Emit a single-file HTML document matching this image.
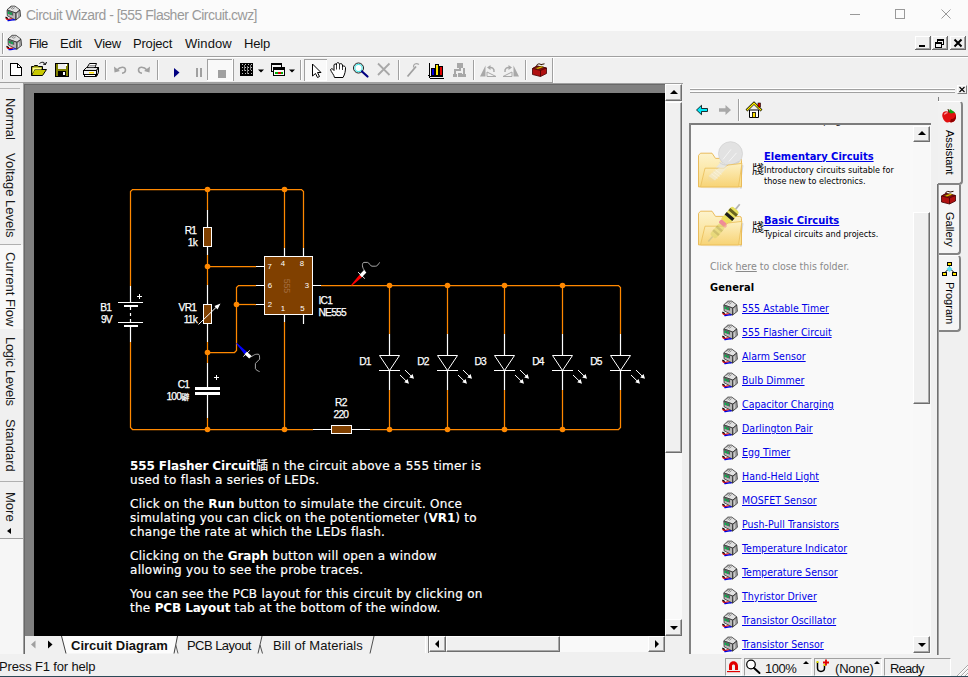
<!DOCTYPE html>
<html>
<head>
<meta charset="utf-8">
<title>Circuit Wizard - [555 Flasher Circuit.cwz]</title>
<style>
html,body{margin:0;padding:0;}
body{width:968px;height:677px;overflow:hidden;background:#f0f0f0;position:relative;font-family:"Liberation Sans","Noto Sans CJK SC",sans-serif;color:#000;}
.abs{position:absolute;}
#titlebar{left:0;top:0;width:968px;height:31px;background:#fbfbfb;}
#title{left:26px;top:6.5px;font-size:14px;line-height:16px;color:#9a9a9a;font-family:"Liberation Sans",sans-serif;white-space:nowrap;letter-spacing:-0.52px;}
#menubar{left:0;top:31px;width:968px;height:25px;background:#f1f1f1;}
.menu{top:36px;font-size:13px;line-height:15px;color:#111;white-space:nowrap;font-family:"Liberation Sans",sans-serif;}
.vtab{position:absolute;white-space:nowrap;transform-origin:0 0;transform:rotate(90deg);font-size:13px;line-height:14px;color:#1a1a1a;font-family:"Liberation Sans",sans-serif;}
.vtab.rv{font-size:11px;line-height:12px;color:#000;}
#grayarea{left:25px;top:84px;width:640px;height:552px;background:#808080;}
#canvas{left:34px;top:93px;width:631px;height:543px;background:#000;}
#desc{left:130px;top:458px;width:400px;color:#fff;font-family:"DejaVu Sans","Noto Sans CJK SC",sans-serif;font-size:12px;line-height:14px;letter-spacing:0.28px;white-space:nowrap;-webkit-text-stroke:0.2px #fff;}
#desc p{margin:0 0 10px 0;}
#desc b{letter-spacing:-0.1px;-webkit-text-stroke:0;}
.btxt{font-size:13px;line-height:15px;font-family:"Liberation Sans",sans-serif;white-space:nowrap;color:#111;}
.sbtn{background:#f0f0f0;border:1px solid;border-color:#fff #6e6e6e #6e6e6e #fff;box-shadow:inset -1px -1px 0 #a8a8a8;box-sizing:border-box;}
.pane{border:1px solid;border-color:#a0a0a0 #fff #fff #a0a0a0;box-sizing:border-box;}
.rt{position:absolute;font-family:"DejaVu Sans Condensed","DejaVu Sans","Liberation Sans",sans-serif;white-space:nowrap;}
.rt.hd{font-size:11px;line-height:13px;font-weight:bold;color:#0000e8;text-decoration:underline;}
.rt.sm{font-size:9px;line-height:11px;color:#000;margin-top:1px;}
.rt.li{left:53px;font-size:10.5px;line-height:13px;color:#0000e8;text-decoration:underline;letter-spacing:0.04px;margin-top:1px;}
</style>
</head>
<body>
<div id="titlebar" class="abs"></div>
<div id="title" class="abs">Circuit Wizard - [555 Flasher Circuit.cwz]</div>
<div id="menubar" class="abs"></div>
<div class="abs menu" style="left:29px;letter-spacing:-0.6px">File</div>
<div class="abs menu" style="left:60px;letter-spacing:-0.2px">Edit</div>
<div class="abs menu" style="left:94px;letter-spacing:-0.3px">View</div>
<div class="abs menu" style="left:133px;letter-spacing:-0.2px">Project</div>
<div class="abs menu" style="left:185px;letter-spacing:0.1px">Window</div>
<div class="abs menu" style="left:244px;letter-spacing:-0.2px">Help</div>
<div id="grayarea" class="abs"></div>
<div id="canvas" class="abs"></div>
<div id="desc" class="abs">
<p><b>555 Flasher Circuit</b><span style="font-family:'Noto Sans CJK SC',sans-serif;font-size:12px;letter-spacing:0">牐</span> n the circuit above a 555 timer is<br>used to flash a series of LEDs.</p>
<p>Click on the <b>Run</b> button to simulate the circuit. Once<br>simulating you can click on the potentiometer (<b>VR1</b>) to<br>change the rate at which the LEDs flash.</p>
<p>Clicking on the <b>Graph</b> button will open a window<br>allowing you to see the probe traces.</p>
<p>You can see the PCB layout for this circuit by clicking on<br>the <b>PCB Layout</b> tab at the bottom of the window.</p>
</div>

<svg class="abs" style="left:0;top:0" width="968" height="677" viewBox="0 0 968 677">
<g fill="none" stroke="#ff8800" stroke-width="1.250">
<!-- top rail and battery side -->
<path d="M130.5 286 V191.5 L132.500 189.500 H301.500 L303.500 191.500 V248"/>
<path d="M130.500 342 V427.500 L132.500 429.500 H313"/>
<path d="M207.5 189.5 V210"/>
<path d="M207.5 255 V285"/>
<path d="M207.5 266.5 H256"/>
<path d="M284.500 189.5 V248"/>
<path d="M207.5 342 V363"/>
<path d="M207.5 418 V429.5"/>
<path d="M256 285.500 H238.500 L236.500 287.500 V350.500 L234.500 352.500 H207.500"/>
<path d="M236.500 304.500 H256"/>
<path d="M284.500 322 V429.5"/>
<path d="M321 285.500 H618.500 L620.500 287.500 V334"/>
<path d="M620.500 390 V427.500 L618.500 429.500 H370"/>
<path d="M389.500 285.5 V334 M389.500 390 V429.5"/>
<path d="M447.500 285.5 V334 M447.500 390 V429.5"/>
<path d="M504.500 285.500 V334 M504.500 390 V429.500"/>
<path d="M562.500 285.5 V334 M562.500 390 V429.5"/>
</g>
<g fill="#ff8800" stroke="none">
<circle cx="207.5" cy="189.500" r="2.8"/><circle cx="284.500" cy="189.500" r="2.8"/>
<circle cx="207.5" cy="266.500" r="2.8"/><circle cx="236.500" cy="304.500" r="2.800"/>
<circle cx="207.5" cy="352.500" r="2.8"/><circle cx="207.5" cy="429.500" r="2.8"/>
<circle cx="284.500" cy="429.500" r="2.8"/>
<circle cx="389.500" cy="285.500" r="2.8"/><circle cx="447.500" cy="285.500" r="2.8"/><circle cx="504.500" cy="285.500" r="2.800"/><circle cx="562.500" cy="285.500" r="2.8"/>
<circle cx="389.500" cy="429.500" r="2.8"/><circle cx="447.500" cy="429.500" r="2.8"/><circle cx="504.500" cy="429.500" r="2.800"/><circle cx="562.500" cy="429.500" r="2.8"/>
</g>
<!-- white leads -->
<g fill="none" stroke="#fff" stroke-width="1.200">
<path d="M130.5 286 V302 M130.5 327 V342"/>
<path d="M118 302.500 H143 M118 322.500 H143"/>
<path d="M130.500 307 V310 M130.500 313 V316 M130.500 319 V322"/>
<path d="M207.5 210 V227 M207.5 247 V255"/>
<path d="M207.5 285 V304 M207.5 324 V342"/>
<path d="M207.5 363 V387 M207.5 395 V418"/>
<path d="M256 266.500 H264 M256 285.500 H264 M256 304.500 H264 M312 285.500 H321"/>
<path d="M284.500 248 V256 M303.500 248 V256 M284.500 315 V322 M303.500 315 V324"/>
<path d="M313 429.500 H331 M352 429.500 H370"/>
<path d="M389.500 334 V390 M447.500 334 V390 M504.500 334 V390 M562.500 334 V390 M620.500 334 V390"/>
</g>
<!-- battery thick plates -->
<g fill="#fff" shape-rendering="crispEdges">
<rect x="124" y="305" width="14" height="2"/><rect x="124" y="325" width="14" height="2"/>
<rect x="195" y="387" width="25" height="3"/><rect x="195" y="392" width="25" height="3"/>
</g>
<!-- resistors -->
<g fill="#804000" stroke="#fff" stroke-width="1" shape-rendering="crispEdges">
<rect x="203.500" y="227.500" width="8" height="19"/>
<rect x="203.500" y="304.500" width="8" height="19"/>
<rect x="331.500" y="425.500" width="20" height="8"/>
<rect x="264.500" y="256.500" width="48" height="58"/>
</g>
<!-- VR arrow -->
<g stroke="#fff" stroke-width="1" fill="#fff">
<path d="M198.500 324.500 L217.500 306"/>
<path d="M220.500 303.500 L214.500 306 L217.500 309.500 Z" stroke="none"/>
</g>
<!-- plus signs -->
<g stroke="#fff" stroke-width="1" shape-rendering="crispEdges" fill="none">
<path d="M137 296.500 H142 M139.500 294 V299"/>
<path d="M214 377.500 H219 M216.500 375 V380"/>
</g>
<!-- LEDs -->
<g id="leds" stroke="#fff" stroke-width="1" fill="none">
<g id="led"><path d="M379.500 355.500 H399.500 L389.500 370.500 Z" fill="#000"/><path d="M379 370.500 H400" shape-rendering="crispEdges"/>
<path d="M405 370 L411.500 376.400 M400 375 L406.500 381.300"/>
<path d="M414 378.800 L412.600 374 L409.200 377.400 Z M409 383.700 L407.600 378.900 L404.200 382.300 Z" fill="#fff" stroke="none"/></g>
<use href="#led" x="58"/><use href="#led" x="115"/><use href="#led" x="173"/><use href="#led" x="231"/>
</g>
<!-- probes -->
<g fill="none">
<path d="M351.100 285 L351.900 285.800 L361.900 277.200 L359.500 274.800 Z" fill="#ff0000"/>
<path d="M359.500 274.800 L364 270.100 L366.400 272.500 L361.900 277.200 Z" fill="#fff"/>
<path d="M358 272.100 L364.800 278.600" stroke="#fff" stroke-width="0.900"/>
<path d="M365 271 C362 268 361.500 263 364 262.400 H367.500 C369.500 262.600 370 266.200 372 266.200 H375.500 C377.500 266.200 378.500 264 379.600 262.400" stroke="#d0d0d0" stroke-width="0.800"/>
<path d="M236.900 343 L236.100 343.600 L244.500 354.200 L246.900 351.800 Z" fill="#0000ff"/>
<path d="M246.900 351.800 L251.600 356 L249.200 358.400 L244.500 354.200 Z" fill="#fff"/>
<path d="M243.300 356.600 L249.800 350.400" stroke="#fff" stroke-width="0.900"/>
<path d="M250.400 357.200 L253.400 355.400 C255 354.300 256 354.200 258.100 354.200 C259.600 354.300 259.600 356 259.600 359.200 L255.400 363.400 V368.700 C256 370 258 371 259.600 371.600" stroke="#d0d0d0" stroke-width="0.800"/>
</g>
<!-- labels -->
<g font-family="'Liberation Sans',sans-serif" font-size="10.200" fill="#fff" stroke="#fff" stroke-width="0.250" letter-spacing="-0.750">
<text x="196.200" y="234" text-anchor="end">R1</text><text x="197.100" y="245.700" text-anchor="end">1k</text>
<text x="196.200" y="311" text-anchor="end">VR1</text><text x="197.100" y="322.600" text-anchor="end">11k</text>
<text x="111.200" y="311" text-anchor="end">B1</text><text x="111.900" y="322.700" text-anchor="end">9V</text>
<text x="189.200" y="388" text-anchor="end">C1</text><text x="189.200" y="399.800" text-anchor="end" font-family="'Liberation Sans','Noto Sans CJK SC',sans-serif">100<tspan font-size="8" letter-spacing="0">礔</tspan></text>
<text x="318.500" y="303.900">IC1</text><text x="318.500" y="315.900">NE555</text>
<text x="340.800" y="405.600" text-anchor="middle">R2</text><text x="340.900" y="417.800" text-anchor="middle">220</text>
<text x="359.200" y="364.900">D1</text><text x="417.200" y="364.900">D2</text><text x="474.400" y="364.900">D3</text><text x="532.200" y="364.900">D4</text><text x="590.200" y="364.900">D5</text>
</g>
<g font-family="'Liberation Sans',sans-serif" font-size="7.800" fill="#fff" text-anchor="middle">
<text x="269.700" y="268.700">7</text><text x="269.800" y="287.700">6</text><text x="269.800" y="306.700">2</text>
<text x="282.900" y="265.800">4</text><text x="302" y="265.800">8</text><text x="307" y="287.700">3</text>
<text x="283" y="310.700">1</text><text x="302.300" y="310.700">5</text>
<text x="0" y="0" fill="#a36c3e" font-size="8.800" letter-spacing="-0.200" transform="translate(284.300 285.800) rotate(90)">555</text>
</g>
</svg>

<!-- left vertical tabs -->
<div class="abs" style="left:0;top:88px;width:20px;height:1px;background:#b8b8b8"></div>
<div class="abs" style="left:0;top:245px;width:23px;height:84px;background:#f8f8f8"></div>
<div class="abs" style="left:0;top:244px;width:21px;height:1px;background:#b0b0b0"></div>
<div class="abs" style="left:0;top:481px;width:23px;height:1px;background:#b0b0b0"></div>
<div class="abs" style="left:0;top:538px;width:24px;height:1px;background:#a0a0a0"></div>
<div class="abs" style="left:23px;top:481px;width:1px;height:58px;background:#a0a0a0"></div>
<div class="abs" style="left:0;top:539px;width:24px;height:115px;background:#f6f6f6"></div>
<div class="vtab" style="left:17px;top:98px">Normal</div>
<div class="vtab" style="left:17px;top:153px">Voltage Levels</div>
<div class="vtab" style="left:17px;top:252px">Current Flow</div>
<div class="vtab" style="left:17px;top:337px;letter-spacing:-0.3px">Logic Levels</div>
<div class="vtab" style="left:17px;top:419px">Standard</div>
<div class="vtab" style="left:17px;top:492px">More</div>
<div class="abs" style="left:7px;top:528px;width:0;height:0;border-top:3px solid transparent;border-bottom:3px solid transparent;border-right:4px solid #000"></div>
<!-- MDI frame & scrollbars -->
<div class="abs" style="left:23px;top:83px;width:660px;height:1px;background:#a0a0a0"></div>
<div class="abs" style="left:24px;top:84px;width:658px;height:1px;background:#696969"></div>
<div class="abs" style="left:23px;top:83px;width:1px;height:571px;background:#a0a0a0"></div>
<div class="abs" style="left:24px;top:84px;width:1px;height:570px;background:#696969"></div>
<!-- vscroll -->
<div class="abs" style="left:665px;top:84px;width:17px;height:552px;background:#f9f9f9"></div>
<div class="abs sbtn" style="left:665px;top:84px;width:17px;height:17px"></div>
<div class="abs sbtn" style="left:665px;top:102px;width:17px;height:351px"></div>
<div class="abs sbtn" style="left:665px;top:619px;width:17px;height:17px"></div>
<div class="abs" style="left:670px;top:90px;width:0;height:0;border-left:4px solid transparent;border-right:4px solid transparent;border-bottom:4px solid #000"></div>
<div class="abs" style="left:670px;top:626px;width:0;height:0;border-left:4px solid transparent;border-right:4px solid transparent;border-top:4px solid #000"></div>
<!-- bottom tab strip -->
<div class="abs" style="left:25px;top:636px;width:657px;height:18px;background:#f0f0f0"></div>
<div class="abs" style="left:429px;top:636px;width:236px;height:16px;background:#f9f9f9"></div>
<div class="abs" style="left:425px;top:636px;width:4px;height:17px;background:#f0f0f0;border-left:1px solid #fff;border-right:1px solid #808080;box-sizing:border-box"></div>
<div class="abs sbtn" style="left:429px;top:636px;width:17px;height:16px"></div>
<div class="abs sbtn" style="left:446px;top:636px;width:114px;height:16px"></div>
<div class="abs sbtn" style="left:648px;top:636px;width:17px;height:16px"></div>
<div class="abs" style="left:435px;top:640px;width:0;height:0;border-top:4px solid transparent;border-bottom:4px solid transparent;border-right:4px solid #000"></div>
<div class="abs" style="left:655px;top:640px;width:0;height:0;border-top:4px solid transparent;border-bottom:4px solid transparent;border-left:4px solid #000"></div>
<div class="abs" style="left:665px;top:636px;width:17px;height:17px;background:#f0f0f0"></div>
<svg class="abs" style="left:25px;top:636px" width="400" height="18" viewBox="0 0 400 18">
<path d="M36.500 0 L41 17.500 H149 L152.500 0 Z" fill="#fcfcfc" stroke="none"/>
<path d="M36.500 0 L41 17.500" fill="none" stroke="#404040" stroke-width="1"/>
<path d="M149 17.500 L152.500 0" fill="none" stroke="#404040" stroke-width="1"/>
<path d="M150.800 9 L153 17.500" fill="none" stroke="#606060" stroke-width="1"/>
<path d="M233 17.500 L237 0 M235 9 L237.500 17.500" fill="none" stroke="#505050" stroke-width="1"/>
<path d="M345 17.500 L349 0" fill="none" stroke="#505050" stroke-width="1"/>
<path d="M10.500 4.500 V12.500 L6 8.500 Z" fill="#a0a0a0"/>
<path d="M23 4.500 V12.500 L27.500 8.500 Z" fill="#000"/>
</svg>
<div class="abs btxt" style="left:71px;top:638px;font-weight:bold;letter-spacing:0">Circuit Diagram</div>
<div class="abs btxt" style="left:187px;top:638px;letter-spacing:-0.55px">PCB Layout</div>
<div class="abs btxt" style="left:273px;top:638px;letter-spacing:0.1px">Bill of Materials</div>
<!-- status bar -->
<div class="abs btxt" style="left:-1px;top:659px;letter-spacing:-0.15px">Press F1 for help</div>
<div class="abs pane" style="left:725px;top:658px;width:17px;height:18px"></div>
<div class="abs pane" style="left:744px;top:658px;width:68px;height:18px"></div>
<div class="abs pane" style="left:814px;top:658px;width:68px;height:18px"></div>
<div class="abs pane" style="left:884px;top:658px;width:67px;height:18px"></div>
<div class="abs btxt" style="left:765px;top:661px;letter-spacing:-0.5px">100%</div>
<div class="abs btxt" style="left:835px;top:661px;letter-spacing:-0.2px">(None)</div>
<div class="abs btxt" style="left:890px;top:661px;letter-spacing:-0.8px">Ready</div>
<div class="abs" style="left:803px;top:661px;width:0;height:0;border-left:3px solid transparent;border-right:3px solid transparent;border-bottom:3px solid #000"></div>
<div class="abs" style="left:874px;top:661px;width:0;height:0;border-left:3px solid transparent;border-right:3px solid transparent;border-bottom:3px solid #000"></div>
<div class="abs" style="left:0;top:675.5px;width:968px;height:1.5px;background:#2c4a58"></div>

<!-- right panel -->
<div class="abs" style="left:690px;top:88px;width:265px;height:2px;border-top:1px solid #fff;border-bottom:1px solid #a0a0a0;box-sizing:border-box"></div>
<div class="abs" style="left:690px;top:91px;width:265px;height:2px;border-top:1px solid #fff;border-bottom:1px solid #a0a0a0;box-sizing:border-box"></div>
<div class="abs" style="left:957px;top:85px;width:10px;height:9px;border:1px solid;border-color:#fff #808080 #808080 #fff;box-sizing:border-box;background:#f0f0f0"></div>
<div class="abs" style="left:937px;top:184px;width:1px;height:471px;background:#707070"></div>
<div class="abs" style="left:938px;top:184px;width:1px;height:471px;background:#a0a0a0"></div>
<div id="rc" class="abs" style="left:689px;top:123px;width:242px;height:531px;background:#f9f9f9;overflow:hidden">
<div class="rt" style="left:134px;top:-9.500px;font-size:11px;line-height:13px;color:#333">page.</div>
<div class="abs" style="left:0;top:0;width:242px;height:2px;background:#7c7c7c"></div>
<div class="abs" style="left:0;top:0;width:2px;height:531px;background:#828282"></div>
<div class="abs" style="left:0;top:1px;width:242px;height:530px">
<a class="rt hd" style="left:75px;top:25.500px">Elementary Circuits</a>
<div class="rt sm" style="left:63px;top:38px;font-family:'Noto Sans CJK SC','WenQuanYi Zen Hei',sans-serif;font-size:12px;line-height:12px">牋</div>
<div class="rt sm" style="left:75px;top:40px">Introductory circuits suitable for</div>
<div class="rt sm" style="left:75px;top:51px">those new to electronics.</div>
<a class="rt hd" style="left:75px;top:89.500px">Basic Circuits</a>
<div class="rt sm" style="left:63px;top:96px;font-family:'Noto Sans CJK SC','WenQuanYi Zen Hei',sans-serif;font-size:12px;line-height:12px">牋</div>
<div class="rt sm" style="left:75px;top:104px">Typical circuits and projects.</div>
<div class="rt" style="left:21px;top:136px;font-size:10.5px;color:#8a8a8a">Click <span style="text-decoration:underline">here</span> to close this folder.</div>
<div class="rt" style="left:21px;top:157px;font-size:11px;font-weight:bold;color:#000;letter-spacing:0.1px">General</div>
<a class="rt li" style="top:177px">555 Astable Timer</a>
<a class="rt li" style="top:201px">555 Flasher Circuit</a>
<a class="rt li" style="top:225px">Alarm Sensor</a>
<a class="rt li" style="top:249px">Bulb Dimmer</a>
<a class="rt li" style="top:273px">Capacitor Charging</a>
<a class="rt li" style="top:297px">Darlington Pair</a>
<a class="rt li" style="top:321px">Egg Timer</a>
<a class="rt li" style="top:345px">Hand-Held Light</a>
<a class="rt li" style="top:369px">MOSFET Sensor</a>
<a class="rt li" style="top:393px">Push-Pull Transistors</a>
<a class="rt li" style="top:417px">Temperature Indicator</a>
<a class="rt li" style="top:441px">Temperature Sensor</a>
<a class="rt li" style="top:465px">Thyristor Driver</a>
<a class="rt li" style="top:489px">Transistor Oscillator</a>
<a class="rt li" style="top:513px">Transistor Sensor</a>
<!-- inner scrollbar -->
<div class="abs" style="left:224px;top:2px;width:17px;height:528px;background:#f8f8f8"></div>
<div class="abs sbtn" style="left:224px;top:2px;width:17px;height:16px"></div>
<div class="abs sbtn" style="left:224px;top:88px;width:17px;height:192px"></div>
<div class="abs sbtn" style="left:224px;top:512px;width:17px;height:17px"></div>
<div class="abs" style="left:229px;top:7px;width:0;height:0;border-left:4px solid transparent;border-right:4px solid transparent;border-bottom:4px solid #000"></div>
<div class="abs" style="left:229px;top:519px;width:0;height:0;border-left:4px solid transparent;border-right:4px solid transparent;border-top:4px solid #000"></div>
</div>
</div>
<!-- right vertical tabs -->
<div class="abs" style="left:938px;top:97px;width:1px;height:5px;background:#808080"></div>
<div class="abs" style="left:938px;top:101px;width:25px;height:84px;border-top:1px solid #fff;border-right:2px solid #858585;border-bottom:2px solid #858585;box-sizing:border-box;border-radius:0 4px 4px 0;background:#f1f1f1"></div>
<div class="abs" style="left:939px;top:185px;width:22px;height:70px;border-right:2px solid #858585;border-bottom:2px solid #858585;box-sizing:border-box;border-radius:0 0 4px 0;background:#f5f5f5"></div>
<div class="abs" style="left:939px;top:255px;width:22px;height:77px;border-top:1px solid #fff;border-right:2px solid #858585;border-bottom:2px solid #858585;box-sizing:border-box;border-radius:0 4px 4px 0;background:#f5f5f5"></div>
<div class="vtab rv" style="left:956px;top:130px">Assistant</div>
<div class="vtab rv" style="left:956px;top:212px">Gallery</div>
<div class="vtab rv" style="left:956px;top:282px">Program</div>

<svg class="abs" style="left:0;top:0" width="968" height="677" viewBox="0 0 968 677">
<defs>
<g id="cwicon">
<path d="M2 4.500 L6 0.800 H10 L15 4.600 L11 7.800 Z" fill="#e2e2e2" stroke="#1a1a1a" stroke-width="0.700" stroke-linejoin="round"/>
<path d="M4.500 3 L6.800 1.200 M6 3.500 L8.300 1.700 M7.500 4 L9.800 2.200" stroke="#666" stroke-width="0.700" fill="none"/>
<path d="M2 4.800 L11 7.800 L10.800 14.800 L2.300 10.500 Z" fill="#b8b8b8" stroke="#1a1a1a" stroke-width="0.700" stroke-linejoin="round"/>
<path d="M2.400 5.300 L8.200 7.200 L8.200 10.400 L2.500 8.500 Z" fill="#5a5a5a"/>
<path d="M3.600 6.500 V8.600 M6 7.300 V9.400" stroke="#00c050" stroke-width="1.400"/>
<path d="M11 7.800 L15 4.800 L15.600 11 L10.800 14.800 Z" fill="#a4a4a4" stroke="#1a1a1a" stroke-width="0.700" stroke-linejoin="round"/>
<path d="M12.300 8 L12.600 12.500" stroke="#dcdcdc" stroke-width="1"/>
<path d="M0.800 12.800 C2.500 15.800 5 13.200 7 13.600" stroke="#e00000" stroke-width="1.300" fill="none"/>
<path d="M2.500 15 C5 16 7.500 13.500 9.800 14.800" stroke="#0000e0" stroke-width="1.300" fill="none"/>
<path d="M0.500 11.800 L3 13.200" stroke="#000" stroke-width="1.200" fill="none"/>
</g>
<g id="toolbox">
<path d="M0.500 5.500 L5 3 L14.500 5 L14.500 10.500 L8.500 13.500 L0.500 11.500 Z" fill="#b01010" stroke="#400" stroke-width="0.800"/>
<path d="M0.500 5.500 L8.500 7.500 L14.500 5 L10.500 4.200 L5 3 Z" fill="#801010" stroke="#400" stroke-width="0.600"/>
<path d="M3.500 5.200 L9.500 3.200 L11.500 4 L6 6 Z" fill="#ffe000" stroke="#604000" stroke-width="0.500"/>
<path d="M8.500 7.500 V13.500" stroke="#400" stroke-width="0.800"/>
<path d="M4.500 2.800 C5 0.500 8 0.500 9 1.600 L12.500 0.800" stroke="#301000" stroke-width="1" fill="none"/>
</g>
<g id="raised"><rect x="0" y="0" width="16" height="14" fill="#f0f0f0"/><path d="M0.500 13 V0.500 H15" stroke="#fff" fill="none"/><path d="M15.500 0 V13.500 H0" stroke="#696969" fill="none"/><path d="M14.500 1 V12.500 H1" stroke="#a0a0a0" fill="none"/></g>
</defs>
<!-- title icon & controls -->
<use href="#cwicon" x="5" y="5.300"/>
<g stroke="#999" stroke-width="1" fill="none" shape-rendering="crispEdges"><path d="M850 14.500 H860"/><rect x="895.500" y="9.500" width="9" height="9"/></g>
<path d="M941.500 9.500 L950.500 18.500 M950.500 9.500 L941.500 18.500" stroke="#999" stroke-width="1" fill="none"/>
<!-- menubar -->
<use href="#cwicon" x="6" y="34.500"/>
<g shape-rendering="crispEdges"><path d="M2.500 33 V54" stroke="#a0a0a0"/><path d="M3.500 33 V54" stroke="#fff"/>
<use href="#raised" x="915" y="36"/><use href="#raised" x="932" y="36"/><use href="#raised" x="950" y="36"/>
<rect x="919" y="45" width="6" height="2" fill="#000"/>
<rect x="937.500" y="39.500" width="6" height="5" fill="none" stroke="#000"/><rect x="937" y="39" width="7" height="2" fill="#000"/>
<rect x="935.500" y="42.500" width="6" height="5" fill="#f0f0f0" stroke="#000"/><rect x="935" y="42" width="7" height="2" fill="#000"/>
</g>
<path d="M954.500 39.500 L961.500 46.500 M961.500 39.500 L954.500 46.500" stroke="#000" stroke-width="2" fill="none"/>
<!-- toolbar frame -->
<g shape-rendering="crispEdges" fill="none">
<path d="M0 56.500 H968" stroke="#a0a0a0"/><path d="M0 57.500 H968" stroke="#fff"/>
<path d="M0 82.500 H553" stroke="#a0a0a0"/><path d="M552.500 58 V82" stroke="#a0a0a0"/><path d="M553.500 58 V83" stroke="#fff"/>
<path d="M2.500 60 V79" stroke="#a0a0a0"/><path d="M3.500 60 V79" stroke="#fff"/>
<g stroke="#a0a0a0"><path d="M76.500 60 V80 M105.500 60 V80 M157.500 60 V80 M300.500 60 V80 M398.500 60 V80 M473.500 60 V80 M525.500 60 V80"/></g>
<g stroke="#fff"><path d="M77.500 60 V80 M106.500 60 V80 M158.500 60 V80 M301.500 60 V80 M399.500 60 V80 M474.500 60 V80 M526.500 60 V80"/></g>
<!-- pressed buttons -->
<rect x="207.500" y="59.500" width="24" height="21" fill="#f9f9f9" stroke="none"/><path d="M207.500 81 V59.500 H232" stroke="#a0a0a0"/><path d="M232.500 59 V80.500 H207" stroke="#fff"/><path d="M233.500 59 V81" stroke="#a0a0a0"/>
<rect x="304.500" y="59.500" width="22" height="21" fill="#f9f9f9" stroke="none"/><path d="M304.500 81 V59.500 H327" stroke="#a0a0a0"/><path d="M326.500 60 V80.500 H305" stroke="#fff"/>
</g>
<!-- new -->
<path d="M10.500 63.500 H17.500 L21.500 67.500 V75.500 H10.500 Z" fill="#fff" stroke="#000" stroke-width="1" shape-rendering="crispEdges"/>
<path d="M17.500 63.500 V67.500 H21.500" fill="none" stroke="#000" stroke-width="1" shape-rendering="crispEdges"/>
<!-- open -->
<path d="M31.500 75.500 V66.500 H33.500 L34.500 65.500 H37.500 L38.500 66.500 H42.500 V69.500" fill="#808000" stroke="#000" stroke-width="1"/>
<path d="M31.500 75.500 L34.500 69.500 H46.500 L42.500 75.500 Z" fill="#c8c800" stroke="#000" stroke-width="1"/>
<path d="M32.500 74 V67.500 H41.500 V69.500 H34.500 Z" fill="#ffff80" stroke="none"/>
<path d="M39.500 63.500 C42 61.500 44.500 62 45.500 64.500 M45.500 64.500 L46.500 62 M45.500 64.500 L43 64" fill="none" stroke="#000" stroke-width="1"/>
<!-- save -->
<g shape-rendering="crispEdges"><rect x="55.500" y="63.500" width="13" height="13" fill="#808000" stroke="#000"/>
<rect x="58" y="64" width="8" height="5" fill="#f0f0f0"/><rect x="65" y="64" width="2" height="2" fill="#fff"/>
<rect x="58" y="71" width="8" height="5" fill="#000"/><rect x="63" y="72" width="2" height="3" fill="#fff"/></g>
<!-- print -->
<g stroke="#000" stroke-width="1" fill="#fff">
<path d="M86.500 68.500 L89.500 63.500 H96.500 L94.500 68.500 Z"/>
<path d="M83.500 70.500 L86.500 67.500 H98.500 L96.500 70.500 Z" fill="#e0e0e0"/>
<rect x="83.500" y="70.500" width="13" height="4" fill="#f4f4f4"/>
<path d="M96.500 70.500 L98.500 67.500 V72.500 L96.500 76.500 Z" fill="#c0c0c0"/>
<rect x="84.500" y="74.500" width="11" height="2" fill="#fff"/>
</g>
<rect x="89" y="72" width="5" height="1.500" fill="#ffe000"/>
<path d="M89.500 65.500 H95 M88.500 67 H94" stroke="#808080" stroke-width="0.800"/>
<!-- undo redo -->
<g fill="none" stroke="#a0a0a0" stroke-width="1.600">
<path d="M117 70 C120 66.500 125.500 66 125.500 70 C125.500 72 124 73 122 73.200"/>
<path d="M147 70 C144 66.500 138.500 66 138.500 70 C138.500 72 140 73 142 73.200"/>
</g>
<path d="M114 66.500 L114.500 72.500 L120 71 Z M150 66.500 L149.500 72.500 L144 71 Z" fill="#a0a0a0"/>
<!-- play pause stop -->
<path d="M174 68 L179.500 72.500 L174 77.500 Z" fill="#000080"/>
<g shape-rendering="crispEdges"><rect x="196" y="68" width="2" height="9" fill="#a0a0a0"/><rect x="200" y="68" width="2" height="9" fill="#a0a0a0"/>
<rect x="218" y="70" width="8" height="8" fill="#a0a0a0"/></g>
<!-- grid icon -->
<g shape-rendering="crispEdges"><rect x="240" y="63" width="13" height="13" fill="#000"/>
<g fill="#c0c0c0"><rect x="242" y="64" width="1" height="1"/><rect x="245" y="64" width="1" height="1"/><rect x="248" y="64" width="1" height="1"/><rect x="251" y="64" width="1" height="1"/>
<rect x="242" y="67" width="1" height="1"/><rect x="245" y="67" width="1" height="1"/><rect x="248" y="67" width="1" height="1"/><rect x="251" y="67" width="1" height="1"/>
<rect x="242" y="70" width="1" height="1"/><rect x="245" y="70" width="1" height="1"/><rect x="248" y="70" width="1" height="1"/><rect x="251" y="70" width="1" height="1"/>
<rect x="242" y="73" width="1" height="1"/><rect x="245" y="73" width="1" height="1"/><rect x="248" y="73" width="1" height="1"/><rect x="251" y="73" width="1" height="1"/></g>
<rect x="244" y="65" width="1" height="6" fill="#808080"/><rect x="247" y="66" width="1" height="8" fill="#808080"/><rect x="250" y="65" width="1" height="5" fill="#808080"/>
</g>
<path d="M258 69.500 H264 L261 72.500 Z M289 69.500 H295 L292 72.500 Z" fill="#000"/>
<!-- window icon -->
<g shape-rendering="crispEdges"><rect x="271.500" y="63.500" width="10" height="8" fill="#f0f0f0" stroke="#000"/><rect x="271" y="63" width="11" height="2" fill="#000"/>
<rect x="273.500" y="67.500" width="11" height="8" fill="#f8f8f8" stroke="#000"/><rect x="273" y="67" width="12" height="3" fill="#000"/>
<rect x="275" y="72" width="3" height="2" fill="#00b000"/><rect x="278" y="72" width="3" height="2" fill="#e00000"/><rect x="281" y="72" width="2" height="2" fill="#00b000"/></g>
<!-- pointer -->
<path d="M312.500 64 V76 L315.500 73.500 L317.500 77.500 L319.500 76.500 L317.500 72.500 H321 Z" fill="#fff" stroke="#000" stroke-width="1" stroke-linejoin="miter"/>
<!-- hand -->
<path d="M334.500 77.500 C334 74.500 331 72 330.500 69.500 C331.500 68 333 69 334 70.500 V65 C334.500 63.500 336 63.500 336.500 65 V63.500 C337.500 62 339 62.500 339.500 64 V64.500 C340.500 63 342 63.500 342.500 65 V66.500 C343.500 65.500 345 66 345.500 67.500 C345.500 71 345 74 343 77.500 Z" fill="#fff" stroke="#000" stroke-width="1" stroke-linejoin="round"/>
<path d="M336.500 65 V69.500 M339.500 64.500 V69.500 M342.500 65.500 V70" stroke="#000" stroke-width="0.800" fill="none"/>
<!-- magnifier -->
<circle cx="358.500" cy="68" r="5" fill="#fff" stroke="#000" stroke-width="0.900"/><circle cx="358.500" cy="68" r="3.600" fill="#fff" stroke="#50e8e8" stroke-width="1.100"/>
<path d="M362 71.500 L367.500 76.500" stroke="#000080" stroke-width="2.200" stroke-linecap="round"/>
<!-- gray X -->
<path d="M378 63.500 L389.500 75 M389.500 63.500 L378 75" stroke="#a8a8a8" stroke-width="1.800" fill="none"/>
<!-- wand gray -->
<path d="M407.500 76.500 L416 66.500" stroke="#a0a0a0" stroke-width="1.800" fill="none"/><path d="M413.500 67.500 C413 64 416 62.500 419 64.500" stroke="#a8a8a8" stroke-width="1.200" fill="none"/>
<!-- chart -->
<g shape-rendering="crispEdges"><path d="M429.500 63 V76.500 H443" stroke="#000" stroke-width="1" fill="none"/><path d="M428.500 75 L430 78 H444" stroke="#000" fill="none" stroke-width="1"/>
<rect x="431.500" y="68.500" width="3" height="7" fill="#0000e0" stroke="#000"/><rect x="435.500" y="64.500" width="3" height="11" fill="#ffe800" stroke="#000"/><rect x="439.500" y="66.500" width="3" height="9" fill="#e00000" stroke="#000"/></g>
<!-- flowchart gray -->
<g fill="#a8a8a8" shape-rendering="crispEdges"><rect x="457" y="63" width="6" height="5"/><rect x="459" y="68" width="2" height="3"/><rect x="455" y="69" width="5" height="2"/><rect x="454" y="69" width="2" height="5"/><rect x="453" y="74" width="4" height="3"/><rect x="458" y="73" width="4" height="2"/><rect x="463" y="68" width="2" height="6"/><rect x="462" y="74" width="4" height="3"/><rect x="458" y="75" width="4" height="2"/></g>
<!-- rotate icons -->
<g fill="#a8a8a8"><path d="M480 76.500 L485.500 65.500 V76.500 Z M519 76.500 L513.500 65.500 V76.500 Z"/>
<path d="M487 76.500 L496 76.500 L487 72 Z M512 76.500 L503 76.500 L512 72 Z" fill="none" stroke="#a8a8a8" stroke-width="1"/>
<path d="M494 72 C494.500 68.500 492 67 489.500 67.500 M505 72 C504.500 68.500 507 67 509.500 67.500" fill="none" stroke="#a8a8a8" stroke-width="1.500"/>
<path d="M487 67.500 L490.500 65 V70 Z M512 67.500 L508.500 65 V70 Z"/></g>
<use href="#toolbox" x="532" y="63"/>
</svg>

<svg class="abs" style="left:0;top:0" width="968" height="677" viewBox="0 0 968 677">
<defs>
<linearGradient id="fg" x1="0" y1="0" x2="0" y2="1"><stop offset="0" stop-color="#fdf1c4"/><stop offset="1" stop-color="#f7d273"/></linearGradient>
<linearGradient id="fb" x1="0" y1="0" x2="0" y2="1"><stop offset="0" stop-color="#fdf3cc"/><stop offset="1" stop-color="#f9dc85"/></linearGradient>
<g id="folderback"><path d="M3 36.500 H42 L45.500 13 L44 12.500 V36 Z" fill="#b0b0b0" opacity="0.450"/><path d="M0.500 34.500 V3 L2.500 0.800 H14 L17.500 6 H41.500 Q43.500 6 43.500 8 V34.500 Z" fill="url(#fb)" stroke="#e8b64e" stroke-width="0.900"/></g>
<g id="folderfront"><path d="M2.500 34.500 L7 15.800 H26 L30 12.600 L44 11 L40.500 34.500 Z" fill="url(#fg)" stroke="#ecc260" stroke-width="0.900" fill-opacity="0.880"/></g>
</defs>
<!-- nav arrows -->
<path d="M696.500 110 L701.500 105.300 V108.500 H707.500 V111.500 H701.500 V114.700 Z" fill="#00e8f8" stroke="#000" stroke-width="0.800" stroke-linejoin="miter"/>
<path d="M731 110 L725.500 105 V108.300 H719 V111.700 H725.500 V115 Z" fill="#a8a8a8" stroke="none"/>
<path d="M738.500 99 V121" stroke="#a0a0a0" shape-rendering="crispEdges"/><path d="M739.500 99 V121" stroke="#fff" shape-rendering="crispEdges"/>
<!-- home -->
<path d="M749.500 117.500 V110 H758.500 V117.500 Z" fill="#fff" stroke="#000" stroke-width="1"/>
<path d="M746.500 110.500 L754 103 L761.500 110.500" fill="none" stroke="#000" stroke-width="2.600"/>
<path d="M746.800 110.300 L754 103.200 L761.200 110.300" fill="none" stroke="#ffee00" stroke-width="1.200"/>
<rect x="758" y="103" width="2.500" height="4" fill="#e00000" stroke="#000" stroke-width="0.600"/>
<rect x="752.500" y="112.500" width="3" height="5" fill="#ffe000" stroke="#000" stroke-width="0.800"/>
<!-- panel close x -->
<path d="M959.500 87 L964.500 92 M964.500 87 L959.500 92" stroke="#000" stroke-width="1.100" fill="none"/>
<!-- folders -->
<g transform="translate(698 152.400)">
<use href="#folderback"/>
<g><circle cx="32.500" cy="1.300" r="12" fill="#e2e2e2" stroke="#cfcfcf" stroke-width="0.700"/><path d="M23 9.500 L30.500 13.500 L17 28 L10.500 23.500 Z" fill="#e6e6e2"/><path d="M10.500 23.500 L17 28 L13 29.500 L9.500 27 Z" fill="#d4d4d0"/><path d="M25 7 L33 -3 M31 9 L38.500 0.500" stroke="#f6f6f6" stroke-width="0.900"/><path d="M21.500 10 C26 14 33 13.500 41 9" stroke="#c8c8c8" stroke-width="0.700" fill="none"/></g>
<use href="#folderfront"/>
<g opacity="0.550"><path d="M22 14.500 L30.500 13.500 L17 28 L10.500 23.500 Z" fill="#f0eee0"/><path d="M13.500 21.500 L19.500 26 M15.500 19.500 L21.500 24 M17.500 17.500 L23.500 22" stroke="#fff" stroke-width="0.900"/></g>
</g>
<g transform="translate(698 210.400)">
<use href="#folderback"/>
<path d="M41.700 -6.200 L37.500 -1" stroke="#b4b4b4" stroke-width="1.700"/>
<g transform="translate(32.300 5.200) rotate(130.700)"><rect x="-8.500" y="-5" width="17" height="10" rx="2.500" fill="#e8e060"/><rect x="-5.800" y="-5" width="3" height="10" fill="#6a6420"/><rect x="-0.500" y="-5" width="3.400" height="10" fill="#1c1c1c"/><rect x="5.200" y="-5" width="3.300" height="10" rx="1" fill="#f0dc60"/></g>
<g transform="translate(25.300 13.200) rotate(130.700)"><rect x="-2.200" y="-4.500" width="4.400" height="9" rx="1.500" fill="#f08c98"/></g>
<use href="#folderfront"/>
<g opacity="0.500"><path d="M25 14 L10.300 31" stroke="#b4b48c" stroke-width="1.500"/><g transform="translate(19.500 20.500) rotate(130.700)"><rect x="-7.500" y="-3.800" width="15" height="7.600" rx="2" fill="#d8d460"/><rect x="-4" y="-3.800" width="2.500" height="7.600" fill="#a8a040"/><rect x="1" y="-3.800" width="2.500" height="7.600" fill="#a8a040"/></g></g>
<g transform="translate(25.300 13.200) rotate(130.700)" opacity="0.600"><rect x="-1" y="-4.500" width="3.200" height="9" rx="1.500" fill="#f08c98"/></g>
</g>
<!-- list icons -->
<g id="lis">
<use href="#cwicon" x="721.800" y="300.300"/><use href="#cwicon" x="721.800" y="324.300"/><use href="#cwicon" x="721.800" y="348.300"/><use href="#cwicon" x="721.800" y="372.300"/><use href="#cwicon" x="721.800" y="396.300"/>
<use href="#cwicon" x="721.800" y="420.300"/><use href="#cwicon" x="721.800" y="444.300"/><use href="#cwicon" x="721.800" y="468.300"/><use href="#cwicon" x="721.800" y="492.300"/><use href="#cwicon" x="721.800" y="516.300"/>
<use href="#cwicon" x="721.800" y="540.300"/><use href="#cwicon" x="721.800" y="564.300"/><use href="#cwicon" x="721.800" y="588.300"/><use href="#cwicon" x="721.800" y="612.300"/><use href="#cwicon" x="721.800" y="636.300"/>
</g>
<!-- right tab icons -->
<g transform="translate(942 109)"><path d="M7 3 C2 0.500 -0.500 4 0.500 8 C1.500 12.500 5 14.500 7.500 13 C10 14.500 13.500 12 14 8 C14.500 4 11.500 1 7 3 Z" fill="#e01010"/><path d="M9 10 C11 10.500 13 9 13.500 6 L14 9 C13 12.500 10.500 14 8 13 Z" fill="#900000"/><path d="M2.500 5.500 C3 4 4.500 3.500 5.500 4" stroke="#ffb0b0" stroke-width="1.200" fill="none"/><path d="M6.500 3 L8 0 L13 3.500 L9 4.500 Z" fill="#10a010"/><path d="M7 3.500 L6 0" stroke="#402000" stroke-width="1"/></g>
<use href="#toolbox" x="941" y="190.500"/>
<g transform="translate(942 262)" shape-rendering="crispEdges"><path d="M7.500 3 V6 M7.500 6 L2.500 11 M7.500 6 L12.500 11" stroke="#000" stroke-width="1" fill="none" shape-rendering="auto"/><rect x="5.500" y="0.500" width="4" height="3" fill="#ffe000" stroke="#000"/><path d="M7.500 4 L10.500 7 L7.500 10 L4.500 7 Z" fill="#60e0f0" stroke="none" shape-rendering="auto"/><rect x="0.500" y="10.500" width="4" height="3" fill="#ffe000" stroke="#000"/><rect x="10.500" y="10.500" width="4" height="3" fill="#ffe000" stroke="#000"/></g>
<!-- status icons -->
<path d="M729 670 V666 C729 659.500 738 659.500 738 666 V670 H735 V666 C735 664 732 664 732 666 V670 Z" fill="#e00000"/>
<rect x="727" y="671" width="13" height="1.200" fill="#e00000"/>
<circle cx="751" cy="664.500" r="4.300" fill="#fff" stroke="#000" stroke-width="1.200"/><path d="M754 668 L759.500 673" stroke="#000" stroke-width="2" stroke-linecap="round"/>
<path d="M817.500 662 V668 C817.500 672.500 824.500 672.500 824.500 668 V665" fill="none" stroke="#000" stroke-width="1.500"/><rect x="816.500" y="661" width="2" height="2" fill="#e0e000"/><rect x="823.500" y="664" width="2" height="2" fill="#e0e000"/>
<path d="M823 662.500 H829 M826 659.500 V665.500" stroke="#e00000" stroke-width="1.800"/>
<!-- grip -->
<g stroke="#a8a8a8" stroke-width="1"><path d="M957 676 L968 665 M961 676 L968 669 M965 676 L968 673"/></g>
<g stroke="#fff" stroke-width="1"><path d="M958 676 L968 666 M962 676 L968 670 M966 676 L968 674"/></g>
</svg>

</body>
</html>
